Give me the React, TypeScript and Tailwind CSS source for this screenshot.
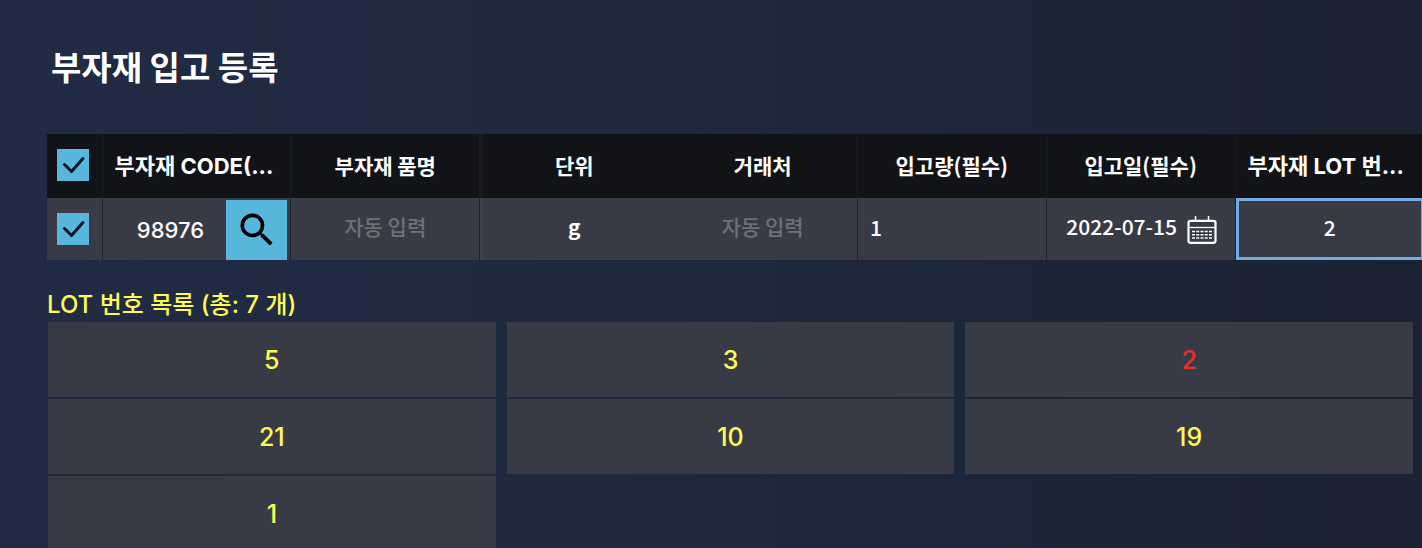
import { useState } from "react";

const headers = [
  "부자재 CODE(...",
  "부자재 품명",
  "단위",
  "거래처",
  "입고량(필수)",
  "입고일(필수)",
  "부자재 LOT 번...",
];

const lots = ["5", "3", "2", "21", "10", "19", "1"];

const kr = "font-['Noto_Sans_CJK_KR',sans-serif]";
const pretendard = "font-['Inter','Noto_Sans_CJK_KR',sans-serif]";
const frozenEdge = "shadow-[inset_7px_0_6px_-6px_rgba(255,255,255,0.07)]";

function headerStyle(i: number) {
  if (i === 0) return `border-r border-[#171d2b] pl-3 text-left text-[22px] ${pretendard}`;
  if (i === 2) return `text-[21px] ${frozenEdge}`;
  if (i === 6) return `pl-3 text-left text-[22px] ${pretendard}`;
  return "border-r border-[#171d2b] text-[21px]";
}

function Check({ label }: { label: string }) {
  return (
    <label className="relative ml-[10px] block size-8">
      <input
        type="checkbox"
        defaultChecked
        aria-label={label}
        className="peer block size-8 appearance-none bg-white checked:bg-[#57b6dc]"
      />
      <svg
        viewBox="0 0 32 32"
        className="pointer-events-none absolute inset-0 hidden size-8 peer-checked:block"
        fill="none"
        stroke="#0f1520"
        strokeWidth="3"
        strokeLinecap="round"
        strokeLinejoin="round"
      >
        <path d="M7.500 15.500 14.500 22.500 26 9.500" />
      </svg>
    </label>
  );
}

function CalendarIcon() {
  return (
    <svg viewBox="0 0 30 28" className="h-7 w-[30px]" fill="none" stroke="white">
      <path d="M8.500 0v5M21.500 0v5" strokeWidth="1.500" />
      <rect x="1.500" y="4.800" width="27" height="22" rx="2" strokeWidth="2.200" />
      <path d="M2 11.500h26" strokeWidth="1.300" />
      <path d="M5 15.500h20M5 18.700h20M5 22h20" strokeWidth="1.500" strokeDasharray="3 1.250" />
    </svg>
  );
}

export default function App() {
  const [lot, setLot] = useState("2");
  return (
    <main
      className={`min-h-screen overflow-hidden bg-linear-to-r from-[#212b44] via-[#1e283e] to-[#1a2233] pl-[47px] text-white ${kr}`}
    >
      <h1 className="pt-10 pl-1 text-[33px] leading-[52px] font-bold">부자재 입고 등록</h1>

      <div className="-mr-[2px] pt-[42px]">
        <table className="w-full table-fixed border-collapse text-center">
          <thead className="bg-[#111317]">
            <tr className="h-16">
              <th className="w-[55px] border-r border-[#171d2b] p-0 pb-[2px]">
                <Check label="전체 선택" />
              </th>
              {headers.map((h, i) => (
                <th key={h} className={`py-0 font-bold whitespace-nowrap ${headerStyle(i)}`}>
                  {h}
                </th>
              ))}
            </tr>
          </thead>
          <tbody className="bg-[#383b46] text-[21px]">
            <tr className="h-[62px]">
              <td className="border-r border-[#1c2130] p-0">
                <Check label="행 선택" />
              </td>
              <td className="border-r border-[#1c2130] p-0">
                <div className="flex h-[62px] pt-[2px] pr-[3px]">
                  <input
                    aria-label="부자재 CODE"
                    defaultValue="98976"
                    className={`min-w-0 flex-1 bg-transparent pl-3 text-center text-[22px] font-medium outline-none ${pretendard}`}
                  />
                  <button
                    type="button"
                    aria-label="검색"
                    className="flex w-[61px] items-center justify-center bg-[#57b6dc]"
                  >
                    <svg viewBox="0 0 24 24" className="size-11" fill="black">
                      <path d="M15.500 14h-.79l-.28-.27A6.471 6.471 0 0 0 16 9.500 6.500 6.500 0 1 0 9.500 16c1.610 0 3.090-.590 4.230-1.570l.27.28v.79l5 4.990L20.490 19l-4.990-5zm-6 0C7.010 14 5 11.990 5 9.500S7.010 5 9.500 5 14 7.010 14 9.500 11.990 14 9.500 14z" />
                    </svg>
                  </button>
                </div>
              </td>
              <td className="border-r border-[#1c2130] p-0 pb-1 font-medium text-[#6e717a]">
                자동 입력
              </td>
              <td className={`p-0 pb-1 font-bold ${frozenEdge}`}>g</td>
              <td className="border-r border-[#1c2130] p-0 pb-1 font-medium text-[#6e717a]">
                자동 입력
              </td>
              <td className="border-r border-[#1c2130] p-0">
                <input
                  aria-label="입고량"
                  defaultValue="1"
                  className="block h-[62px] w-full bg-transparent px-3 pb-1 font-medium outline-none"
                />
              </td>
              <td className="border-r border-[#1c2130] p-0">
                <div className="flex items-center justify-center gap-2">
                  <input
                    aria-label="입고일"
                    defaultValue="2022-07-15"
                    className="w-[114px] bg-transparent pb-1 text-center font-medium outline-none"
                  />
                  <button type="button" aria-label="날짜 선택" className="pt-[2px]">
                    <CalendarIcon />
                  </button>
                </div>
              </td>
              <td className="p-0">
                <input
                  aria-label="부자재 LOT 번호"
                  value={lot}
                  onChange={(e) => setLot(e.target.value)}
                  className="block h-[62px] w-full border-3 border-[#73abe4] bg-transparent pb-1 text-center font-medium outline-none"
                />
              </td>
            </tr>
          </tbody>
        </table>
      </div>

      <section className={`pt-7 font-medium ${pretendard}`}>
        <h2 className="text-[24px] leading-[34px] text-[#fffb54]">LOT 번호 목록 (총: 7 개)</h2>
        <div className="mr-[9px] ml-px grid grid-cols-3 gap-x-[11px] gap-y-[2px]">
          {lots.map((n) => (
            <button
              type="button"
              key={n}
              onClick={() => setLot(n)}
              className={`h-[75px] bg-[#383b46] pt-[2px] text-[25px] font-medium ${n === lot ? "text-[#e63324]" : "text-[#fffb54]"}`}
            >
              {n}
            </button>
          ))}
        </div>
      </section>
    </main>
  );
}
